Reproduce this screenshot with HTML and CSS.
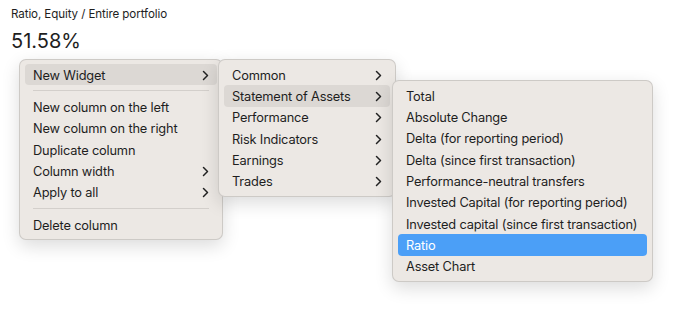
FILE: index.html
```html
<!DOCTYPE html>
<html lang="en">
<head>
  <meta charset="UTF-8" />
  <meta name="viewport" content="width=device-width, initial-scale=1.0"/>
  <title>Ratio widget</title>
  <link rel="stylesheet" href="styles.css">
</head>
<body>
  <div class="widget">
    <div class="widget-title">Ratio, Equity / Entire portfolio</div>
    <div class="widget-value">51.58%</div>
  </div>

  <div class="menu menu-main">
    <div class="item active">New Widget <span class="chev"></span></div>
    <div class="sep"></div>
    <div class="item">New column on the left</div>
    <div class="item">New column on the right</div>
    <div class="item">Duplicate column</div>
    <div class="item">Column width <span class="chev"></span></div>
    <div class="item">Apply to all <span class="chev"></span></div>
    <div class="sep"></div>
    <div class="item">Delete column</div>
  </div>

  <div class="menu menu-widgets">
    <div class="item">Common <span class="chev"></span></div>
    <div class="item active">Statement of Assets <span class="chev"></span></div>
    <div class="item">Performance <span class="chev"></span></div>
    <div class="item">Risk Indicators <span class="chev"></span></div>
    <div class="item">Earnings <span class="chev"></span></div>
    <div class="item">Trades <span class="chev"></span></div>
  </div>

  <div class="menu menu-assets">
    <div class="item">Total</div>
    <div class="item">Absolute Change</div>
    <div class="item">Delta (for reporting period)</div>
    <div class="item">Delta (since first transaction)</div>
    <div class="item">Performance-neutral transfers</div>
    <div class="item">Invested Capital (for reporting period)</div>
    <div class="item">Invested capital (since first transaction)</div>
    <div class="item selected">Ratio</div>
    <div class="item">Asset Chart</div>
  </div>

  <script>
    // chevrons for submenu items
    document.querySelectorAll(".chev").forEach(el => {
      el.innerHTML = '<svg width="7" height="11" viewBox="0 0 7 11"><polyline points="1.5,1.5 5.5,5.5 1.5,9.5" fill="none" stroke="#222" stroke-width="1.5" stroke-linecap="round" stroke-linejoin="round"/></svg>';
    });
  </script>
</body>
</html>
```

FILE: styles.css
```css
body {
  margin: 0;
  font-family: Inter, "Noto Sans", sans-serif;
  color: #1e1e1e;
  background: #fff;
  position: relative;
  width: 690px;
  height: 309px;
  overflow: hidden;
}
.widget {
  padding: 6px 11px;
}
.widget-title {
  font-size: 11.6px;
  line-height: 16px;
  letter-spacing: -0.1px;
}
.widget-value {
  font-size: 20px;
  line-height: 26px;
  margin-top: 6px;
}
.menu {
  position: absolute;
  background: #ece8e4;
  border: 1px solid rgba(0, 0, 0, 0.13);
  border-radius: 7px;
  box-shadow: 0 6px 18px rgba(0, 0, 0, 0.14);
  padding: 4px 5px;
  font-size: 12.8px;
  letter-spacing: -0.17px;
}
.menu-main {
  left: 19px;
  top: 59px;
  width: 192px;
}
.menu-widgets {
  left: 218px;
  top: 59px;
  width: 166px;
}
.menu-assets {
  left: 392px;
  top: 80px;
  width: 249px;
}
.item {
  display: flex;
  align-items: center;
  justify-content: space-between;
  box-sizing: border-box;
  height: 21.33px;
  padding: 1px 8px 0;
  border-radius: 4px;
  white-space: nowrap;
}
.item.active {
  background: #dcd8d4;
}
.item.selected {
  background: #4b9ff7;
  color: #fff;
}
.chev {
  display: flex;
}
.sep {
  height: 1px;
  margin: 5px 8px;
  background: #d3cfcb;
}
```
